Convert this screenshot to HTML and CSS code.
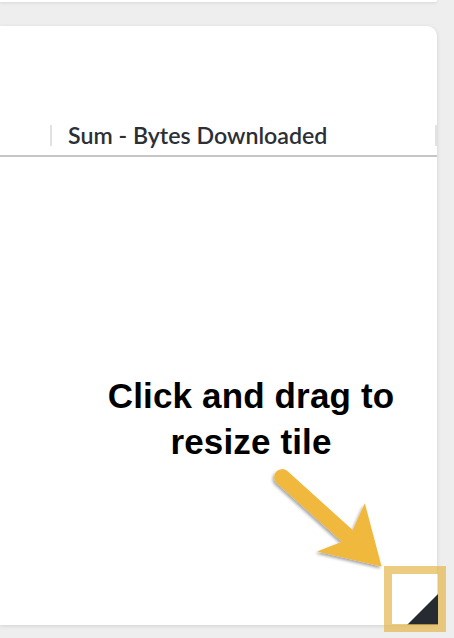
FILE: index.html
```html
<!DOCTYPE html>
<html>
<head>
<meta charset="utf-8">
<link rel="stylesheet" href="styles.css">
</head>
<body>
<div class="page">
  <div class="top-panel"></div>
  <div class="tile">
    <div class="table-head">
      <div class="col col-prev"></div>
      <div class="col col-main"><span class="col-title">Sum - Bytes Downloaded</span></div>
      <div class="col col-next"></div>
    </div>
    <div class="tile-body"></div>
    <div class="resize-handle"></div>
    <div class="callout">Click and drag to<br>resize tile</div>
    <svg class="arrow" width="437" height="599" viewBox="0 26 437 599" xmlns="http://www.w3.org/2000/svg">
      <defs>
        <filter id="sh" x="-20%" y="-20%" width="140%" height="140%">
          <feDropShadow dx="-1.5" dy="2" stdDeviation="1.6" flood-color="#000" flood-opacity="0.35"/>
        </filter>
      </defs>
      <path filter="url(#sh)" fill="#f0b83c" d="M287.4 471.1 L352.7 530 L364.8 503.2 L381.6 566.6 L317.1 551.6 L342 541.8 L276.6 482.9 A8 8 0 0 1 287.4 471.1 Z"/>
    </svg>
    <div class="highlight"></div>
  </div>
</div>
</body>
</html>
```

FILE: styles.css
```css
html, body {
  margin: 0;
  padding: 0;
}
body {
  background: #eeeeee;
  width: 454px;
  height: 638px;
  overflow: hidden;
  font-family: Lato, "Noto Sans", sans-serif;
}
.page {
  display: flex;
  flex-direction: column;
  gap: 24px;
}
.top-panel {
  height: 2px;
  width: 437px;
  background: #ffffff;
  border-radius: 0 0 10px 0;
  box-shadow: 0 1px 3px rgba(0,0,0,0.12);
}
.tile {
  position: relative;
  width: 437px;
  height: 599px;
  background: #ffffff;
  border-radius: 0 10px 0 0;
  box-shadow: 0 1px 4px rgba(0,0,0,0.12);
  display: flex;
  flex-direction: column;
}
.table-head {
  margin-top: 99px;
  height: 30px;
  display: flex;
  border-bottom: 2px solid #c6c6c6;
}
.col {
  display: flex;
  align-items: flex-start;
}
.col-prev {
  width: 50px;
}
.col-main {
  flex: 1;
  border-left: 2px solid #e2e2e2;
  border-right: 2px solid #e2e2e2;
  height: 21px;
  padding-left: 16px;
}
.col-next {
  width: 0;
}
.col-title {
  font-size: 23.2px;
  font-weight: 600;
  line-height: 21px;
  color: #2b2f36;
  white-space: nowrap;
}
.tile-body {
  flex: 1;
}
.resize-handle {
  position: absolute;
  right: -1px;
  bottom: 0;
  width: 0;
  height: 0;
  border-left: 31px solid transparent;
  border-bottom: 31px solid #262a31;
}
.callout {
  position: absolute;
  left: 59px;
  width: 384px;
  top: 347px;
  text-align: center;
  font-family: "Liberation Sans", Arial, sans-serif;
  font-weight: bold;
  font-size: 35px;
  line-height: 46px;
  letter-spacing: 0.15px;
  color: #000000;
}
.arrow {
  position: absolute;
  left: 0;
  top: 0;
  overflow: visible;
}
.highlight {
  position: absolute;
  left: 384px;
  top: 540px;
  width: 46px;
  height: 50px;
  border: 8px solid rgba(228, 185, 80, 0.72);
}
```
